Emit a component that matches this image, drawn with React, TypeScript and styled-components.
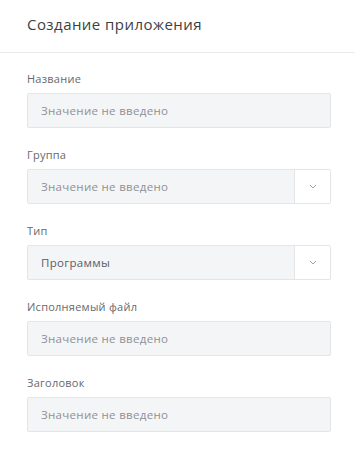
import React from 'react';
import styled, { createGlobalStyle } from 'styled-components';

const GlobalStyle = createGlobalStyle`
  html, body {
    margin: 0;
    padding: 0;
    background: #ffffff;
  }
  body {
    font-family: 'Open Sans', 'DejaVu Sans', sans-serif;
  }
`;

const Panel = styled.div`
  width: 355px;
  height: 456px;
  background: #ffffff;
  box-sizing: border-box;
`;

const Header = styled.div`
  display: flex;
  align-items: center;
  box-sizing: border-box;
  height: 53px;
  padding: 0 27px 4px;
  border-bottom: 1px solid #e9eaec;
`;

const Title = styled.h1`
  margin: 0;
  font-size: 15px;
  font-weight: 400;
  color: #3c3f43;
  letter-spacing: 0.45px;
`;

const Body = styled.div`
  display: flex;
  flex-direction: column;
  gap: 20px;
  padding: 19px 24px 0 27px;
`;

const Field = styled.div`
  display: flex;
  flex-direction: column;
  gap: 7px;
`;

const Label = styled.label`
  font-size: 11px;
  line-height: 14px;
  color: #66696e;
  letter-spacing: 0.25px;
`;

const Box = styled.div`
  display: flex;
  align-items: stretch;
  box-sizing: border-box;
  height: 35px;
  border: 1px solid #e3e5e8;
  border-radius: 2px;
  background: #f4f5f7;
  overflow: hidden;
`;

const Value = styled.div<{ $filled?: boolean }>`
  flex: 1;
  display: flex;
  align-items: center;
  padding: 0 13px;
  font-size: 11.5px;
  letter-spacing: 0.3px;
  color: ${(p) => (p.$filled ? '#5a5d62' : '#8e9195')};
`;

const Toggle = styled.div`
  display: flex;
  align-items: center;
  justify-content: center;
  width: 35px;
  background: #ffffff;
  border-left: 1px solid #e3e5e8;
`;

function Chevron() {
  return (
    <svg width="8" height="5" viewBox="0 0 8 5">
      <path d="M1 1 L4 4 L7 1" fill="none" stroke="#a0a3a7" strokeWidth="1" />
    </svg>
  );
}

type FieldProps = {
  label: string,
  value?: string,
  select?: boolean,
};

function FormField({ label, value, select }: FieldProps): JSX.Element {
  return (
    <Field>
      <Label>{label}</Label>
      <Box>
        <Value $filled={!!value}>{value || 'Значение не введено'}</Value>
        {select && (
          <Toggle>
            <Chevron />
          </Toggle>
        )}
      </Box>
    </Field>
  );
}

export default function App(): JSX.Element {
  return (
    <Panel>
      <GlobalStyle />
      <Header>
        <Title>Создание приложения</Title>
      </Header>
      <Body>
        <FormField label="Название" />
        <FormField label="Группа" select />
        <FormField label="Тип" value="Программы" select />
        <FormField label="Исполняемый файл" />
        <FormField label="Заголовок" />
      </Body>
    </Panel>
  );
}
